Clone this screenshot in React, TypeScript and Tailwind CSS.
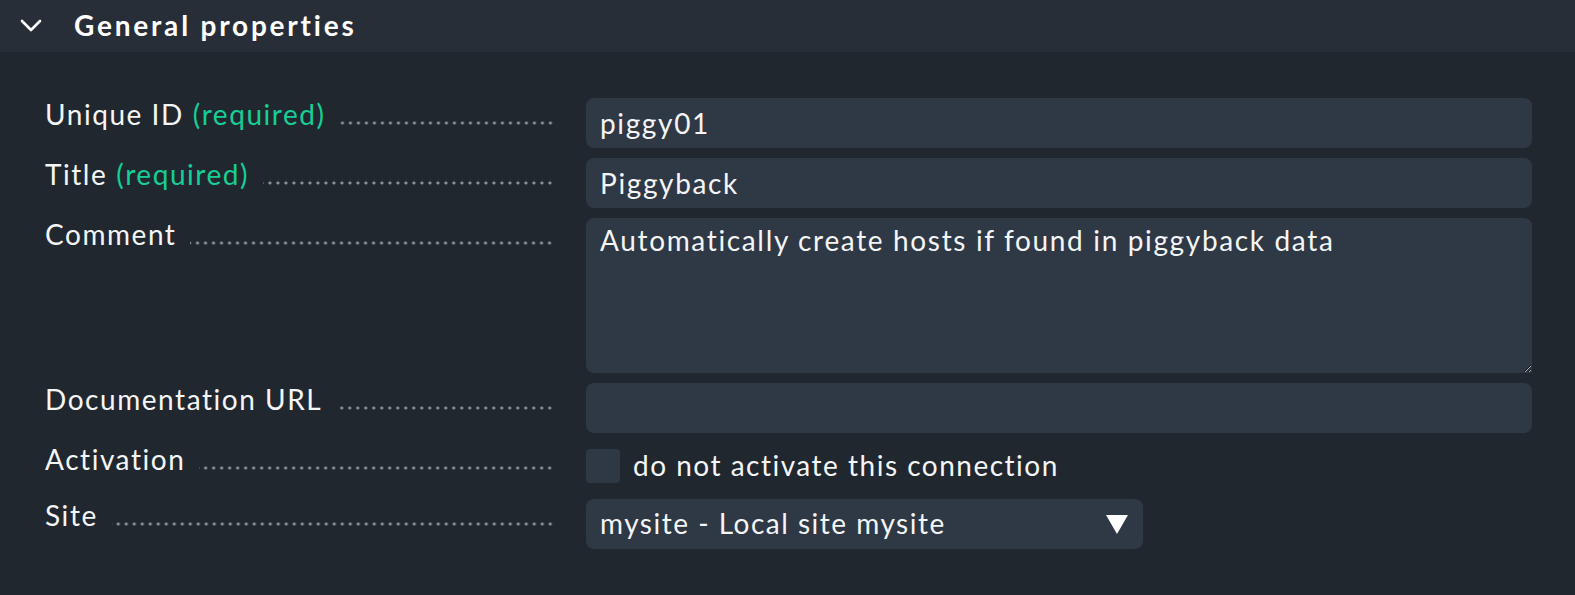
import React from "react";

const FONT = "font-['Lato','Noto_Sans',sans-serif]";

const Label = ({ text, required = false }: { text: string; required?: boolean }) => (
  <div className="flex w-[511px] shrink-0 leading-[1.2]">
    <span className="whitespace-nowrap text-[28px] tracking-[1.55px] text-[#f4f5f6]">
      {text}
      {required && <span className="ml-[9px] text-[#15cf96]">(required)</span>}
    </span>
    <div className="ml-[14px] mr-[2px] mt-[23px] h-[4px] flex-1 bg-[radial-gradient(circle,#8e949c_1.3px,transparent_1.8px)] bg-[length:8px_4px] bg-right bg-repeat-x" />
  </div>
);

const Row = ({ children, label, required }: { children: React.ReactNode; label: string; required?: boolean }) => (
  <div className="flex pl-[45px] pr-[43px]">
    <Label text={label} required={required} />
    <div className="ml-[30px] flex-1">{children}</div>
  </div>
);

const inputCls =
  "block h-[50px] w-full rounded-[8px] bg-[#2f3845] px-[14px] text-[28px] leading-[1.2] tracking-[1.65px] text-[#f4f5f6] outline-none";

export default function App() {
  return (
    <div className={`${FONT} min-h-[595px] w-full bg-[#21272f]`}>
      {/* Section header */}
      <div className="flex h-[52px] items-center bg-[#282e38]">
        <svg width="22" height="14" viewBox="0 0 22 14" className="ml-[20px]" fill="none">
          <polyline points="2,2 11,11 20,2" stroke="#ffffff" strokeWidth="2.6" strokeLinecap="round" strokeLinejoin="round" />
        </svg>
        <span className="ml-[32px] text-[28px] leading-[1.2] font-bold tracking-[2.8px] text-white">General properties</span>
      </div>

      <div className="flex flex-col gap-[10px] pt-[46px] pb-[48px]">
        <Row label="Unique ID" required>
          <input className={inputCls} defaultValue="piggy01" />
        </Row>
        <Row label="Title" required>
          <input className={inputCls} defaultValue="Piggyback" />
        </Row>
        <Row label="Comment">
          <textarea
            className="block h-[155px] w-full resize-y rounded-tl-[8px] rounded-tr-[8px] rounded-bl-[8px] bg-[#2f3845] px-[14px] pt-[6px] text-[28px] leading-[1.2] tracking-[1.65px] text-[#f4f5f6] outline-none"
            defaultValue="Automatically create hosts if found in piggyback data"
          />
        </Row>
        <Row label="Documentation URL">
          <input className={inputCls} defaultValue="" />
        </Row>
        <Row label="Activation">
          <div className="flex h-[46px] items-center">
            <div className="h-[34px] w-[34px] rounded-[4px] bg-[#2f3845]" />
            <span className="ml-[13px] text-[28px] leading-[1.2] tracking-[1.5px] text-[#f4f5f6]">do not activate this connection</span>
          </div>
        </Row>
        <Row label="Site">
          <div className="flex h-[50px] w-[557px] items-center justify-between rounded-[8px] bg-[#2f3845] pl-[14px] pr-[14px]">
            <span className="text-[28px] leading-[1.2] tracking-[1.5px] text-[#f4f5f6]">mysite - Local site mysite</span>
            <svg width="24" height="20" viewBox="0 0 24 20">
              <polygon points="1,1 23,1 12,20" fill="#ffffff" />
            </svg>
          </div>
        </Row>
      </div>
    </div>
  );
}
